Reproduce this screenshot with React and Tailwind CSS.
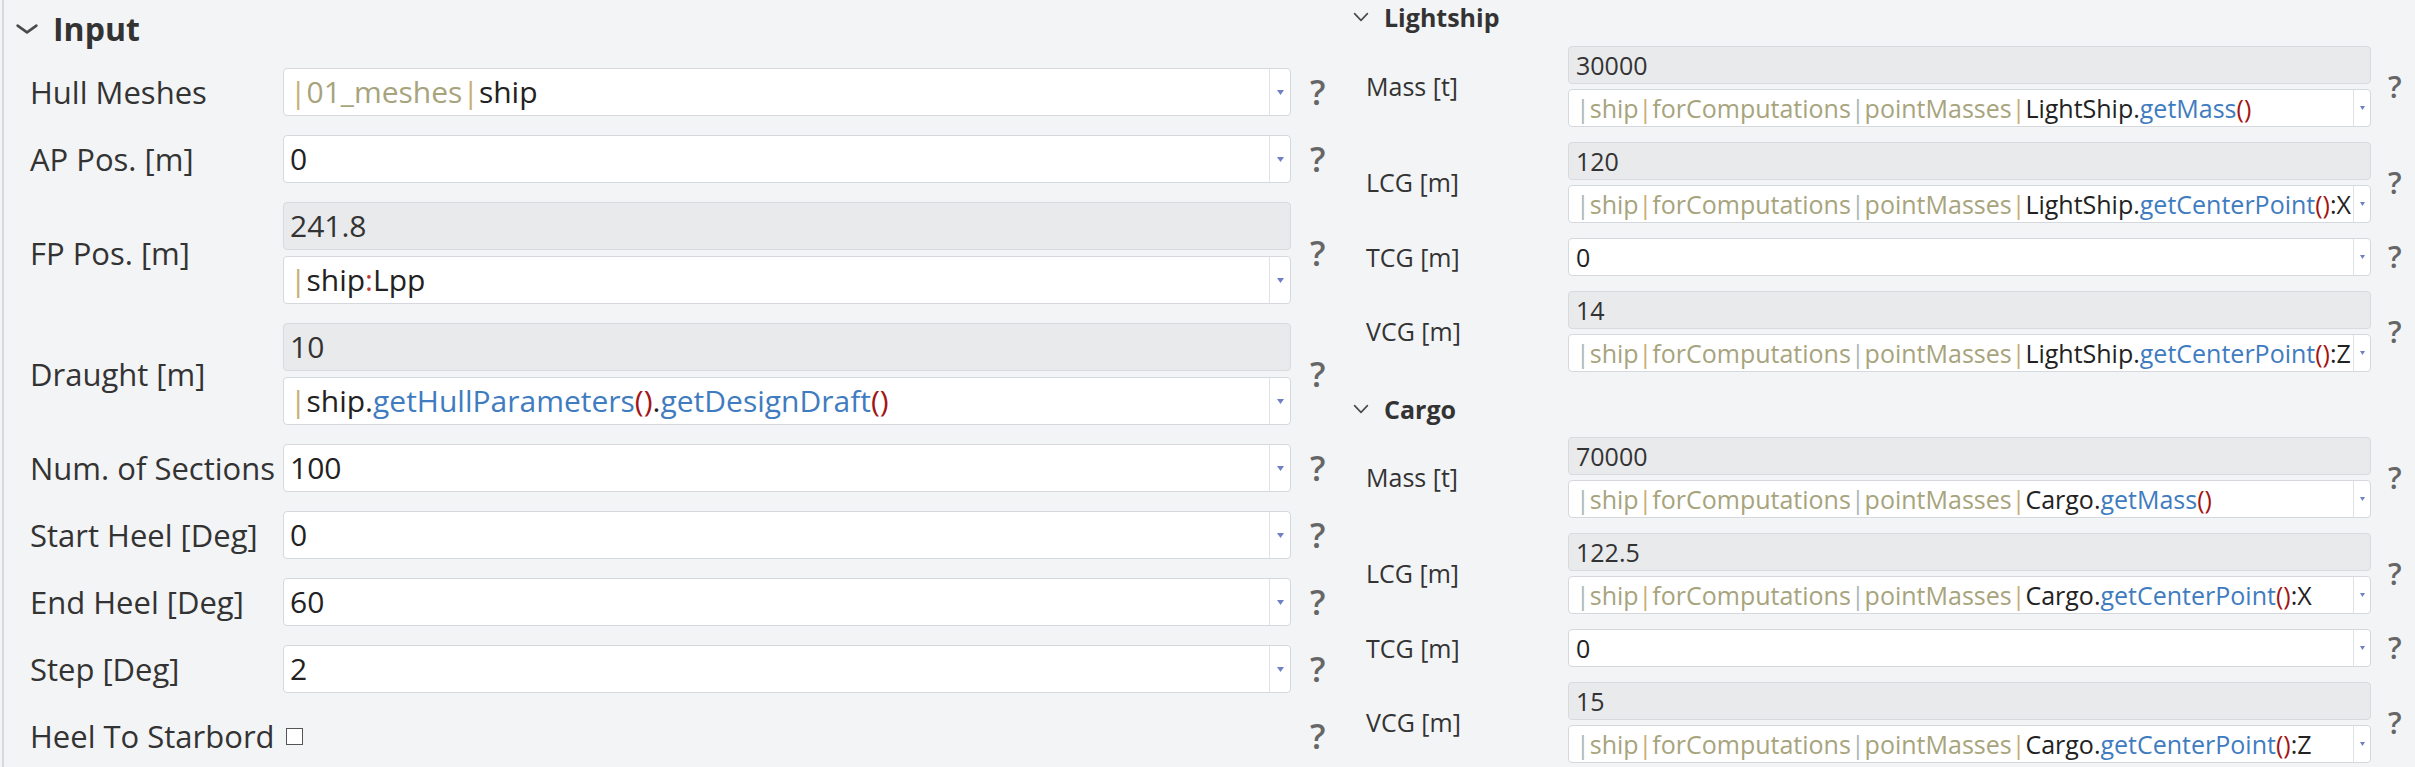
import React from "react";

const GOLD = "text-[#c8ad74]";
const GRAYP = "text-[#a9b8b8]";

function Seg({ c, children }) {
  return <span className={c}>{children}</span>;
}

function Tri() {
  return (
    <svg width="7" height="5" viewBox="0 0 7 5">
      <path d="M0 0 L7 0 L3.5 5 Z" fill="#6f7fc8" />
    </svg>
  );
}

function Chevron({ w, h, sw }) {
  return (
    <svg width={w} height={h} viewBox={`0 0 ${w} ${h}`} fill="none">
      <polyline
        points={`${sw},${sw} ${w / 2},${h - sw} ${w - sw},${sw}`}
        stroke="#4a4a4a"
        strokeWidth={sw}
        strokeLinecap="round"
        strokeLinejoin="round"
      />
    </svg>
  );
}

function LInput({ children }) {
  return (
    <div className="flex h-[48px] w-[1008px] rounded-[4px] border border-[#d5d8dc] bg-white">
      <div className="flex flex-1 items-center overflow-hidden whitespace-nowrap px-[6px] text-[30px] leading-none text-[#222]">
        {children}
      </div>
      <div className="flex w-[21px] items-center justify-center border-l border-[#dfe1e4]">
        <Tri />
      </div>
    </div>
  );
}

function LGray({ children }) {
  return (
    <div className="flex h-[48px] w-[1008px] items-center rounded-[4px] border border-[#d8dadd] bg-[#e9eaec] px-[6px] text-[30px] leading-none text-[#333]">
      {children}
    </div>
  );
}

function RInput({ children }) {
  return (
    <div className="flex h-[38px] w-[803px] rounded-[4px] border border-[#d5d8dc] bg-white">
      <div className="flex flex-1 items-center overflow-hidden whitespace-nowrap px-[7px] text-[25px] leading-none text-[#222]">
        {children}
      </div>
      <div className="flex w-[17px] items-center justify-center border-l border-[#dfe1e4]">
        <svg width="5" height="4" viewBox="0 0 5 4">
          <path d="M0 0 L5 0 L2.5 4 Z" fill="#6f7fc8" />
        </svg>
      </div>
    </div>
  );
}

function RGray({ children }) {
  return (
    <div className="flex h-[38px] w-[803px] items-center rounded-[4px] border border-[#d8dadd] bg-[#e9eaec] px-[7px] text-[25px] leading-none text-[#333]">
      {children}
    </div>
  );
}

function LRow({ label, children }) {
  return (
    <div className="flex items-center">
      <div className="w-[253px] whitespace-nowrap text-[31px] leading-none text-[#333]">
        {label}
      </div>
      <div className="flex flex-col gap-[6px]">{children}</div>
      <div className="ml-[19px] text-[34px] font-semibold leading-none text-[#666]">?</div>
    </div>
  );
}

function RRow({ label, children }) {
  return (
    <div className="flex items-center">
      <div className="w-[202px] whitespace-nowrap text-[25px] leading-none text-[#333]">
        {label}
      </div>
      <div className="flex flex-col gap-[5px]">{children}</div>
      <div className="ml-[17px] text-[30px] font-semibold leading-none text-[#666]">?</div>
    </div>
  );
}

function Formula({ obj, method, suffix }) {
  return (
    <>
      <Seg c={GRAYP}>|</Seg>
      <Seg c="text-[#a7a47d]">ship</Seg>
      <Seg c={GOLD}>|</Seg>
      <Seg c="text-[#a7a47d]">forComputations</Seg>
      <Seg c={GRAYP}>|</Seg>
      <Seg c="text-[#a7a47d]">pointMasses</Seg>
      <Seg c={GOLD}>|</Seg>
      <Seg c="text-[#222]">{obj}.</Seg>
      <Seg c="text-[#3f7cbf]">{method}</Seg>
      <Seg c="text-[#a31515]">()</Seg>
      {suffix ? <Seg c="text-[#222]">{suffix}</Seg> : null}
    </>
  );
}

function RHeader({ title }) {
  return (
    <div className="flex h-[34px] items-center">
      <div className="ml-[13px] flex w-[31px] items-center">
        <Chevron w={16} h={10} sw={1.6} />
      </div>
      <div className="text-[25px] font-bold leading-none text-[#333]">{title}</div>
    </div>
  );
}

function Rows({ mass, lcg, tcg, vcg, obj }) {
  return (
    <div className="flex flex-col gap-[15px] pl-[26px]">
      <RRow label="Mass [t]">
        <RGray>{mass}</RGray>
        <RInput>
          <Formula obj={obj} method="getMass" />
        </RInput>
      </RRow>
      <RRow label="LCG [m]">
        <RGray>{lcg}</RGray>
        <RInput>
          <Formula obj={obj} method="getCenterPoint" suffix=":X" />
        </RInput>
      </RRow>
      <RRow label="TCG [m]">
        <RInput>{tcg}</RInput>
      </RRow>
      <RRow label="VCG [m]">
        <RGray>{vcg}</RGray>
        <RInput>
          <Formula obj={obj} method="getCenterPoint" suffix=":Z" />
        </RInput>
      </RRow>
    </div>
  );
}

export default function App() {
  return (
    <div className="flex h-[767px] w-[2415px] overflow-hidden bg-[#f3f4f6] font-['Open_Sans',sans-serif]">
      {/* Left panel */}
      <div className="ml-[2px] flex w-[1338px] shrink-0 flex-col border-l-2 border-[#d5d8dc]">
        <div className="flex h-[58px] items-center">
          <div className="ml-[11px] flex w-[38px] items-center">
            <Chevron w={24} h={12} sw={2.6} />
          </div>
          <div className="text-[32px] font-bold leading-none text-[#333]">Input</div>
        </div>
        <div className="flex flex-col gap-[19px] pl-[26px] pt-[10px]">
          <LRow label="Hull Meshes">
            <LInput>
              <Seg c={GOLD}>|</Seg>
              <Seg c="text-[#a7a47d]">01_meshes</Seg>
              <Seg c={GOLD}>|</Seg>
              <Seg c="text-[#222]">ship</Seg>
            </LInput>
          </LRow>
          <LRow label="AP Pos. [m]">
            <LInput>0</LInput>
          </LRow>
          <LRow label="FP Pos. [m]">
            <LGray>241.8</LGray>
            <LInput>
              <Seg c={GOLD}>|</Seg>
              <Seg c="text-[#222]">ship</Seg>
              <Seg c="text-[#c0392b]">:</Seg>
              <Seg c="text-[#222]">Lpp</Seg>
            </LInput>
          </LRow>
          <LRow label="Draught [m]">
            <LGray>10</LGray>
            <LInput>
              <Seg c={GOLD}>|</Seg>
              <Seg c="text-[#222]">ship.</Seg>
              <Seg c="text-[#3f7cbf]">getHullParameters</Seg>
              <Seg c="text-[#a31515]">()</Seg>
              <Seg c="text-[#222]">.</Seg>
              <Seg c="text-[#3f7cbf]">getDesignDraft</Seg>
              <Seg c="text-[#a31515]">()</Seg>
            </LInput>
          </LRow>
          <LRow label="Num. of Sections">
            <LInput>100</LInput>
          </LRow>
          <LRow label="Start Heel [Deg]">
            <LInput>0</LInput>
          </LRow>
          <LRow label="End Heel [Deg]">
            <LInput>60</LInput>
          </LRow>
          <LRow label="Step [Deg]">
            <LInput>2</LInput>
          </LRow>
          <div className="flex h-[48px] items-center">
            <div className="w-[256px] whitespace-nowrap text-[31px] leading-none text-[#333]">
              Heel To Starbord
            </div>
            <div className="h-[17px] w-[17px] border-[1.5px] border-[#555] bg-white" />
            <div className="w-[988px]" />
            <div className="ml-[19px] text-[34px] font-semibold leading-none text-[#666]">?</div>
          </div>
        </div>
      </div>

      {/* Right panel */}
      <div className="flex flex-1 flex-col">
        <RHeader title="Lightship" />
        <div className="mt-[12px]">
          <Rows mass="30000" lcg="120" tcg="0" vcg="14" obj="LightShip" />
        </div>
        <div className="mt-[20px]">
          <RHeader title="Cargo" />
        </div>
        <div className="mt-[11px]">
          <Rows mass="70000" lcg="122.5" tcg="0" vcg="15" obj="Cargo" />
        </div>
      </div>
    </div>
  );
}
